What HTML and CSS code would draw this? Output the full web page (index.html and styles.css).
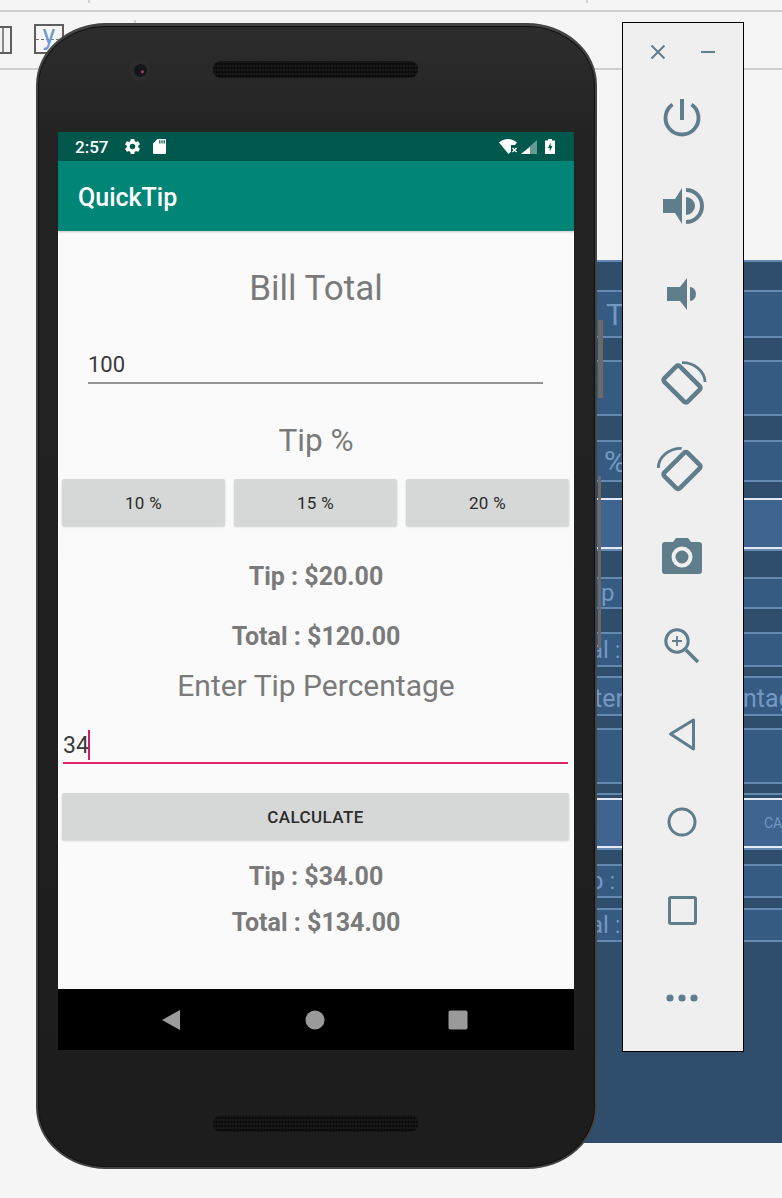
FILE: index.html
```html
<!DOCTYPE html>
<html lang="en">
<head>
  <meta charset="UTF-8" />
  <meta name="viewport" content="width=device-width, initial-scale=1.0"/>
  <title>QuickTip emulator</title>
  <link rel="stylesheet" href="styles.css">
</head>
<body>
  <div class="desk">
    <div class="rule rule-top"></div>
    <div class="rule rule-mid"></div>
    <div class="tick tick-a"></div>
    <div class="tick tick-b"></div>
    <div class="tick tick-c"></div>
    <div class="tool tool-split"></div>
    <div class="tool tool-y"><span>y</span></div>

    <div class="blueprint">
      <div class="bp-row dark"></div>
      <div class="bp-row light bp-big"><span class="bp-t">T</span></div>
      <div class="bp-row dark"></div>
      <div class="bp-row light"></div>
      <div class="bp-row dark"></div>
      <div class="bp-row light bp-big"><span class="bp-pct">%</span></div>
      <div class="bp-row dark"></div>
      <div class="bp-row bright"></div>
      <div class="bp-row dark"></div>
      <div class="bp-row light bp-mid"><span class="bp-p">p</span></div>
      <div class="bp-row dark"></div>
      <div class="bp-row light bp-mid"><span class="bp-al">al :</span></div>
      <div class="bp-row dark"></div>
      <div class="bp-row light bp-big"><span class="bp-ter">ter</span><span class="bp-ntag">ntag</span></div>
      <div class="bp-row dark"></div>
      <div class="bp-row light"></div>
      <div class="bp-row dark"></div>
      <div class="bp-row dark"></div>
      <div class="bp-row bright bp-small"><span class="bp-ca">CA</span></div>
      <div class="bp-row dark"></div>
      <div class="bp-row light bp-mid"><span class="bp-tip">p : $</span></div>
      <div class="bp-row dark"></div>
      <div class="bp-row light bp-mid"><span class="bp-al">al :</span></div>
      <div class="bp-row dark"></div>
    </div>

    <div class="phone">
      <div class="side-btn side-power"></div>
      <div class="side-btn side-volume"></div>
      <div class="earpiece">
        <div class="camera"><div class="lens"></div></div>
        <div class="speaker"></div>
      </div>

      <div class="screen">
        <div class="statusbar">
          <span class="clock">2:57</span>
          <svg class="st-gear" viewBox="0 0 24 24"><path fill="#fff" d="M19.14 12.94c.04-.3.06-.61.06-.94 0-.32-.02-.64-.07-.94l2.03-1.58a.49.49 0 0 0 .12-.61l-1.92-3.32a.488.488 0 0 0-.59-.22l-2.39.96c-.5-.38-1.03-.7-1.62-.94l-.36-2.54a.484.484 0 0 0-.48-.41h-3.84c-.24 0-.43.17-.47.41l-.36 2.54c-.59.24-1.13.57-1.62.94l-2.39-.96c-.22-.08-.47 0-.59.22L2.74 8.87c-.12.21-.08.47.12.61l2.03 1.58c-.05.3-.09.63-.09.94s.02.64.07.94l-2.03 1.58a.49.49 0 0 0-.12.61l1.92 3.32c.12.22.37.29.59.22l2.39-.96c.5.38 1.03.7 1.62.94l.36 2.54c.05.24.24.41.48.41h3.84c.24 0 .44-.17.47-.41l.36-2.54c.59-.24 1.13-.56 1.62-.94l2.39.96c.22.08.47 0 .59-.22l1.92-3.32c.12-.22.07-.47-.12-.61l-2.01-1.58zM12 15.6c-1.98 0-3.6-1.62-3.6-3.6s1.62-3.6 3.6-3.6 3.6 1.62 3.6 3.6-1.62 3.6-3.6 3.6z"/></svg>
          <svg class="st-sd" viewBox="0 0 13 15"><path fill="#fff" fill-rule="evenodd" d="M4.500 0H12a1 1 0 0 1 1 1v13a1 1 0 0 1-1 1H1a1 1 0 0 1-1-1V4.500zM6.200 1.200v3.300h1.200V1.200zM8.400 1.200v3.300h1.200V1.200zM10.600 1.200v3.300h1.200V1.200z"/></svg>
          <span class="st-spacer"></span>
          <svg class="st-wifi" viewBox="0 0 19 15"><path fill="#fff" d="M0 3.500C2.500 1.200 5.700 0 9 0s6.500 1.200 9 3.500L16 6h-4v6.500L9.500 15z"/><path stroke="#fff" stroke-width="1.300" d="M13.500 9l4 4m0-4l-4 4"/></svg>
          <svg class="st-signal" viewBox="0 0 16 14"><path fill="#fff" fill-opacity=".4" d="M16 0v14H0z"/><path fill="#fff" d="M9 7v7H0z"/></svg>
          <svg class="st-batt" viewBox="0 0 10 15"><path fill="#fff" fill-rule="evenodd" d="M3 0h4v1.500h3V15H0V1.500h3zM5.800 3.500L3 9h1.800v3.500L7.500 7H5.600z"/></svg>
        </div>
        <div class="appbar">QuickTip</div>

        <div class="content">
          <div class="title-bill">Bill Total</div>
          <div class="bill-input">100</div>
          <div class="title-tip">Tip %</div>
          <div class="tip-buttons">
            <div class="btn">10 %</div>
            <div class="btn">15 %</div>
            <div class="btn">20 %</div>
          </div>
          <div class="result first-tip">Tip : $20.00</div>
          <div class="result first-total">Total : $120.00</div>
          <div class="title-enter">Enter Tip Percentage</div>
          <div class="pct-input"><span>34</span><i class="caret"></i></div>
          <div class="btn btn-wide">CALCULATE</div>
          <div class="result second-tip">Tip : $34.00</div>
          <div class="result second-total">Total : $134.00</div>
        </div>

        <div class="navbar">
          <svg class="nav-icon" viewBox="0 0 20 20"><path fill="#9a9a9a" d="M19 0v20L1 10z"/></svg>
          <svg class="nav-icon" viewBox="0 0 20 20"><circle fill="#9a9a9a" cx="10" cy="10" r="9.500"/></svg>
          <svg class="nav-icon" viewBox="0 0 20 20"><rect fill="#9a9a9a" x="0.500" y="0.500" width="19" height="19" rx="2"/></svg>
        </div>
      </div>

      <div class="earpiece earpiece-bottom">
        <div class="speaker"></div>
      </div>
    </div>

    <div class="panel">
      <div class="panel-head">
        <svg class="head-icon" viewBox="0 0 16 16"><path d="M1.500 1.500l13 13m0-13l-13 13"/></svg>
        <svg class="head-icon" viewBox="0 0 16 16"><path d="M1 8h14"/></svg>
      </div>
      <svg class="panel-icon" viewBox="0 0 40 40">
        <path class="line" stroke-width="3.800" d="M10.500 6.500A16.500 16.500 0 1 0 29.500 6.500"/>
        <path class="line" stroke-width="4" d="M20 1v21"/>
      </svg>
      <svg class="panel-icon" viewBox="0 0 40 40">
        <path class="fill" d="M1 13h12l7-11v36L13 27H1z"/>
        <path class="fill" d="M24 11a9 9 0 0 1 0 18zM24 2a18 18 0 0 1 0 36v-4a14 14 0 0 0 0-28z"/>
      </svg>
      <svg class="panel-icon" viewBox="0 0 40 40">
        <path class="fill" d="M5 13h13l7-9v32l-7-9H5z"/>
        <path class="fill" d="M28 13a6 7 0 0 1 0 14z"/>
      </svg>
      <svg class="panel-icon" viewBox="0 0 40 40">
        <rect class="line" stroke-width="4.600" x="9" y="5.500" width="22" height="33" rx="2.500" transform="rotate(-45 20 22)"/>
        <path class="line" stroke-width="2.800" d="M20 0.700A23 19.500 0 0 1 43 20"/>
      </svg>
      <svg class="panel-icon" viewBox="0 0 40 40">
        <rect class="line" stroke-width="4.600" x="9" y="4" width="22" height="33" rx="2.500" transform="rotate(45 20 20.500)"/>
        <path class="line" stroke-width="2.800" d="M19.700-1.700A23 20 0 0 0-3.700 18"/>
      </svg>
      <svg class="panel-icon" viewBox="0 0 40 40">
        <path class="fill" fill-rule="evenodd" d="M14 0h12l3 4h8a3 3 0 0 1 3 3v26a3 3 0 0 1-3 3H3a3 3 0 0 1-3-3V7a3 3 0 0 1 3-3h8zM20 8.500a10.500 10.500 0 1 0 0 21 10.500 10.500 0 0 0 0-21zM20 12.500a6.500 6.500 0 1 1 0 13 6.500 6.500 0 0 1 0-13z"/>
      </svg>
      <svg class="panel-icon" viewBox="0 0 40 40">
        <circle class="line" stroke-width="3" cx="15" cy="15" r="11.200"/>
        <path class="line" stroke-width="1.800" d="M10 15h10M15 10v10"/>
        <path class="line" stroke-width="3.600" d="M24 24l12 12"/>
      </svg>
      <svg class="panel-icon" viewBox="0 0 40 40">
        <path class="line" stroke-width="3" stroke-linejoin="round" d="M8.500 20L31.500 6v29z"/>
      </svg>
      <svg class="panel-icon" viewBox="0 0 40 40">
        <circle class="line" stroke-width="3" cx="20" cy="20" r="13"/>
      </svg>
      <svg class="panel-icon" viewBox="0 0 40 40">
        <rect class="line" stroke-width="3" x="7.500" y="7.500" width="26" height="26" rx="1.500"/>
      </svg>
      <svg class="panel-icon" viewBox="0 0 40 40">
        <circle class="fill" cx="8" cy="20" r="3.600"/>
        <circle class="fill" cx="20" cy="20" r="3.600"/>
        <circle class="fill" cx="32" cy="20" r="3.600"/>
      </svg>
    </div>
  </div>
</body>
</html>
```

FILE: styles.css
```css
body {
  margin: 0;
  font-family: 'Roboto', sans-serif;
  background: #f5f5f5;
}

.desk {
  position: relative;
  width: 782px;
  height: 1198px;
  overflow: hidden;
  background: #f5f5f5;
}

/* IDE chrome behind the emulator */
.rule {
  position: absolute;
  left: 0;
  right: 0;
  height: 2px;
  background: #cfcfcf;
}

.rule-top { top: 10px; }
.rule-mid { top: 68px; }

.tick {
  position: absolute;
  top: 0;
  width: 2px;
  height: 3px;
  background: #d2d2d2;
}

.tick-a { left: 88px; }
.tick-b { left: 586px; }
.tick-c { left: 134px; top: 20px; }

.tool {
  position: absolute;
  box-sizing: border-box;
  border: 2px solid #5e5e5e;
}

.tool-split {
  left: -8px;
  top: 26px;
  width: 20px;
  height: 28px;
  background: linear-gradient(90deg, transparent 8px, #8a8a8a 8px, #8a8a8a 10px, transparent 10px);
}

.tool-y {
  left: 34px;
  top: 24px;
  width: 30px;
  height: 30px;
  color: #6f9bd1;
  font-size: 27px;
  line-height: 18px;
  text-align: center;
  background-color: #f6f6f6;
  background-image: repeating-linear-gradient(90deg, #777 0, #777 3px, transparent 3px, transparent 5px);
  background-size: 100% 1px;
  background-position: 0 13px;
  background-repeat: no-repeat;
}

/* layout editor blueprint, mostly hidden by the phone */
.blueprint {
  position: absolute;
  left: 570px;
  top: 260px;
  width: 212px;
  height: 883px;
  display: grid;
  grid-template-rows: 30px 46px 24px 54px 26px 40px 18px 51px 28px 30px 25px 33px 11px 38px 14px 54px 11px 5px 50px 16px 32px 12px 32px 203px;
  background: #2f4e6c;
  border-bottom: 2px solid #6d9ad2;
  box-sizing: border-box;
  color: #7398c2;
}

.bp-row {
  display: flex;
  align-items: center;
  box-sizing: border-box;
  border-top: 2px solid #6689b1;
  overflow: hidden;
  white-space: nowrap;
}

.dark { background: #2f4e6c; }
.light { background: #365b83; }

.bright {
  background: #3f648f;
  border-top-color: #e4e8f2;
  border-bottom: 2px solid #e4e8f2;
}

.bp-big { font-size: 30px; }
.bp-mid { font-size: 24px; }
.bp-small { font-size: 14px; }

.bp-t { margin-left: 36px; }
.bp-pct { margin-left: 34px; }
.bp-p { margin-left: 31px; }
.bp-al { margin-left: 20px; }
.bp-ter { margin: 4px 0 0 24px; font-size: 25px; }
.bp-ntag { margin: 4px 0 0 119px; font-size: 25px; }
.bp-ca { margin-left: 194px; }
.bp-tip { margin-left: 20px; }

/* phone */
.phone {
  position: absolute;
  left: 36px;
  top: 23px;
  box-sizing: border-box;
  width: 561px;
  height: 1146px;
  padding: 0 23px 0 20px;
  border-radius: 70px / 62px;
  background: linear-gradient(180deg, #2d2d2d 0, #232323 110px, #1d1d1d 1100px);
  border: 2px solid #444;
  border-top-width: 3px;
  box-shadow: inset 0 0 0 1px #111;
}

.side-btn {
  position: absolute;
  background: #6a6a6a;
}

.side-power {
  left: 560px;
  top: 294px;
  width: 5px;
  height: 78px;
}

.side-volume {
  left: 560px;
  top: 450px;
  width: 3px;
  height: 172px;
}

.earpiece {
  position: relative;
  height: 106px;
  display: flex;
  justify-content: center;
  padding-top: 35px;
  box-sizing: border-box;
}

.earpiece-bottom {
  height: auto;
  padding-top: 65px;
}

.camera {
  position: absolute;
  left: 71px;
  top: 33px;
  width: 22px;
  height: 22px;
  border-radius: 50%;
  background: #2c2c2c;
  display: flex;
  align-items: center;
  justify-content: center;
}

.lens {
  width: 13px;
  height: 13px;
  border-radius: 50%;
  background: radial-gradient(circle at 65% 60%, #8a4a5a 0, #8a4a5a 1px, #15151b 2px);
}

.speaker {
  width: 205px;
  height: 17px;
  border-radius: 8px;
  background-color: #171717;
  background-image: radial-gradient(circle, #060606 1px, transparent 1.200px);
  background-size: 3px 4px;
  background-position: 2px 1px;
}

.screen {
  width: 516px;
  height: 918px;
  display: flex;
  flex-direction: column;
  background: #fafafa;
}

.statusbar {
  height: 29px;
  padding: 0 19px 0 17px;
  display: flex;
  align-items: center;
  background: #00574b;
  color: #fff;
}

.clock {
  font-size: 17px;
  font-weight: 500;
}

.st-gear { width: 19px; height: 19px; margin-left: 15px; }
.st-sd { width: 13px; height: 15px; margin-left: 11px; }
.st-spacer { flex: 1; }
.st-wifi { width: 19px; height: 15px; }
.st-signal { width: 16px; height: 14px; margin-left: 3px; }
.st-batt { width: 10px; height: 15px; margin-left: 8px; }

.appbar {
  height: 70px;
  padding: 2px 0 0 20px;
  box-sizing: border-box;
  display: flex;
  align-items: center;
  background: #008577;
  color: #fff;
  font-size: 25px;
  font-weight: 500;
  box-shadow: 0 1px 2px rgba(0, 0, 0, 0.2);
}

.content {
  flex: 1;
  display: flex;
  flex-direction: column;
  color: #7a7a7a;
  text-align: center;
}

.title-bill {
  font-size: 35px;
  line-height: 40px;
  margin-top: 38px;
}

.bill-input {
  margin: 42px 31px 0 30px;
  height: 31px;
  border-bottom: 2px solid #949494;
  font-size: 22px;
  line-height: 28px;
  color: #3a3a3a;
  text-align: left;
}

.title-tip {
  font-size: 31.5px;
  line-height: 40px;
  margin-top: 37px;
}

.tip-buttons {
  display: flex;
  gap: 9px;
  margin: 18px 5px 0 4px;
  height: 47px;
}

.btn {
  flex: 1;
  display: flex;
  align-items: center;
  justify-content: center;
  border-radius: 2px;
  background: #d6d7d7;
  box-shadow: 0 1px 2px rgba(0, 0, 0, 0.18);
  color: #2b2b2b;
  font-size: 17px;
  letter-spacing: 0.3px;
}

.result {
  font-size: 25px;
  font-weight: 700;
  line-height: 30px;
}

.first-tip { margin-top: 36px; }
.first-total { margin-top: 30px; }

.title-enter {
  font-size: 30px;
  line-height: 36px;
  margin-top: 16px;
}

.pct-input {
  margin: 24px 6px 0 5px;
  height: 34px;
  display: flex;
  align-items: center;
  border-bottom: 2px solid #e0266b;
  font-size: 23px;
  color: #3a3a3a;
}

.caret {
  width: 2px;
  height: 30px;
  margin-left: -1px;
  background: #d81b60;
}

.btn-wide {
  flex: none;
  height: 47px;
  margin: 29px 5px 0 4px;
  font-weight: 500;
  letter-spacing: 0.4px;
}

.second-tip { margin-top: 22px; }
.second-total { margin-top: 16px; }

.navbar {
  height: 61px;
  padding: 0 106px 0 103px;
  display: flex;
  align-items: center;
  justify-content: space-between;
  background: #000;
}

.nav-icon {
  width: 20px;
  height: 20px;
}

/* emulator side panel */
.panel {
  position: absolute;
  left: 622px;
  top: 22px;
  box-sizing: border-box;
  width: 122px;
  height: 1030px;
  border: 1px solid #000;
  background: #efefef;
  display: flex;
  flex-direction: column;
  align-items: center;
  gap: 48px;
  padding: 75px 2px 0 0;
}

.panel-head {
  position: absolute;
  top: 21px;
  left: 27px;
  display: flex;
  gap: 34px;
}

.head-icon {
  width: 16px;
  height: 16px;
  fill: none;
  stroke: #607d8b;
  stroke-width: 2;
}

.panel-icon {
  width: 40px;
  height: 40px;
  flex: none;
  overflow: visible;
}

.panel-icon .line {
  fill: none;
  stroke: #607d8b;
}

.panel-icon .fill {
  fill: #607d8b;
}
```
